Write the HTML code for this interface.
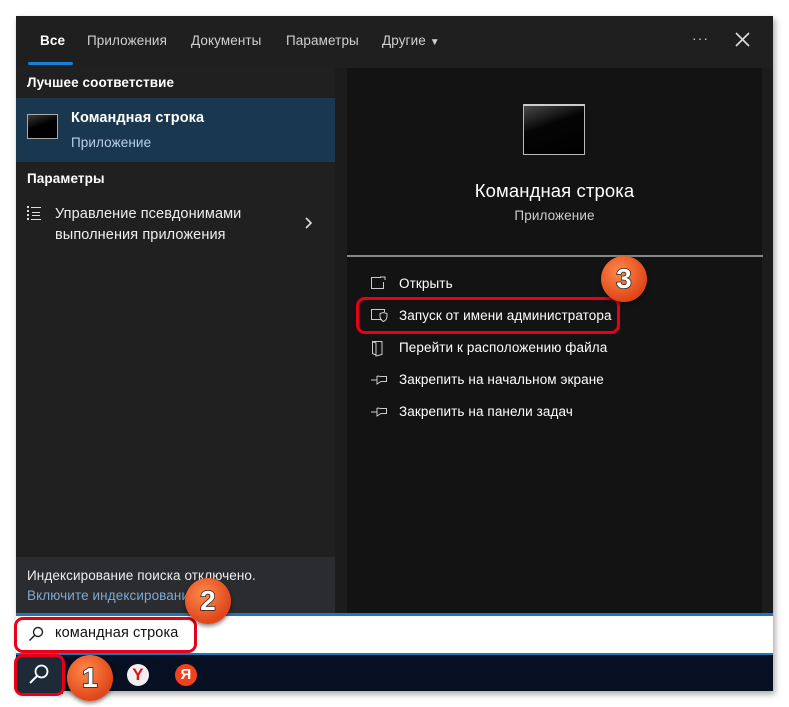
<!DOCTYPE html>
<html><head><meta charset="utf-8"><style>
*{margin:0;padding:0;box-sizing:border-box}
body{width:789px;height:707px;background:#fff;position:relative;overflow:hidden;font-family:"Segoe UI","Liberation Sans","DejaVu Sans",sans-serif;color:#fff;letter-spacing:0.1px}
.a{position:absolute}
.win{left:16px;top:16px;width:757px;height:675px;background:#1c1c1c;box-shadow:2px 3px 6px rgba(0,0,0,.35)}
.tab{top:33px;font-size:13.5px;color:#d0d0d0}
.t{font-size:13.5px;color:#fff;white-space:nowrap}
.badge{width:46px;height:46px;border-radius:50%;background:radial-gradient(circle at 40% 35%,#ff8a4a,#e0461a 70%);box-shadow:0 2px 4px rgba(0,0,0,.5);color:#fff;font:bold 28px "Liberation Sans",sans-serif;text-align:center;line-height:46px;-webkit-text-stroke:1.5px #222;paint-order:stroke fill}
.red{border:3px solid #e8001a;border-radius:9px}
</style></head><body>
<div class="a win"></div>
<div class="a" style="left:16px;top:16px;width:757px;height:52px;background:#1f1f1f"></div>
<div class="a tab" style="left:40px;color:#fff;font-weight:bold">Все</div>
<div class="a" style="left:28px;top:62px;width:45px;height:3px;background:#1a7fd6;border-radius:2px"></div>
<div class="a tab" style="left:87px">Приложения</div>
<div class="a tab" style="left:191px">Документы</div>
<div class="a tab" style="left:286px">Параметры</div>
<div class="a tab" style="left:382px">Другие <span style="font-size:10px">▼</span></div>
<div class="a" style="left:692px;top:30px;font-size:14px;color:#ccc;letter-spacing:1px">···</div>
<svg class="a" style="left:735px;top:32px" width="15" height="15"><path d="M1 1L14 14M14 1L1 14" stroke="#ddd" stroke-width="1.6"/></svg>
<div class="a" style="left:16px;top:68px;width:319px;height:545px;background:#202020"></div>
<div class="a t" style="left:27px;top:75px;font-weight:bold">Лучшее соответствие</div>
<div class="a" style="left:16px;top:98px;width:319px;height:64px;background:#19374f"></div>
<div class="a" style="left:27px;top:114px;width:31px;height:25px;background:linear-gradient(160deg,#3a3a3a,#000 45%);border:1px solid #aaa"></div>
<div class="a t" style="left:71px;top:110px;font-size:14.5px;font-weight:bold">Командная строка</div>
<div class="a t" style="left:71px;top:135px;color:#b9d0e6">Приложение</div>
<div class="a t" style="left:27px;top:171px;font-weight:bold">Параметры</div>
<svg class="a" style="left:27px;top:206px" width="16" height="14"><g fill="#ddd"><rect x="0" y="0" width="2" height="2"/><rect x="0" y="4" width="2" height="2"/><rect x="0" y="8" width="2" height="2"/><rect x="0" y="12" width="2" height="2"/><rect x="4" y="1" width="10" height="1"/><rect x="5" y="6" width="8" height="1"/><rect x="5" y="9" width="8" height="1"/><rect x="4" y="13" width="10" height="1"/></g></svg>
<div class="a t" style="left:55px;top:204px;font-size:14.5px;line-height:21px;color:#eee">Управление псевдонимами<br>выполнения приложения</div>
<svg class="a" style="left:305px;top:217px" width="8" height="12"><path d="M1 1L6 6L1 11" stroke="#ddd" stroke-width="1.6" fill="none"/></svg>
<div class="a" style="left:16px;top:557px;width:319px;height:56px;background:#2b2c2f"></div>
<div class="a t" style="left:27px;top:568px;color:#eee">Индексирование поиска отключено.</div>
<div class="a t" style="left:27px;top:588px;color:#7fa9d0">Включите индексирование</div>
<div class="a" style="left:347px;top:68px;width:415px;height:545px;background:#131313"></div>
<div class="a" style="left:523px;top:104px;width:62px;height:51px;background:linear-gradient(160deg,#4a4a4a,#050505 40%,#000);border:1px solid #bbb;border-top:2px solid #ccc"></div>
<div class="a t" style="left:347px;width:415px;text-align:center;top:180px;font-size:18.5px">Командная строка</div>
<div class="a t" style="left:347px;width:415px;text-align:center;top:208px;color:#ccc">Приложение</div>
<div class="a" style="left:347px;top:255px;width:416px;height:2px;background:#888"></div>
<svg class="a" style="left:370px;top:276px" width="16" height="14"><path d="M11 1.5H1.5V12.5H13.5V6M10 1H15V4" stroke="#ccc" fill="none"/></svg>
<div class="a t" style="left:399px;top:276px">Открыть</div>
<svg class="a" style="left:370px;top:308px" width="18" height="16"><path d="M12 11.5H1.5V1.5H14.5V4M10 8V5.5L13.5 4.5L17 5.5V8Q17 12 13.5 13.5Q10 12 10 8Z" stroke="#ccc" fill="none"/></svg>
<div class="a t" style="left:399px;top:308px">Запуск от имени администратора</div>
<svg class="a" style="left:371px;top:340px" width="14" height="18"><path d="M1.5 1.5L11 1.5V14.5L5 16V3L1.5 1.5V13.5L5 15" stroke="#ccc" fill="none"/></svg>
<div class="a t" style="left:399px;top:340px">Перейти к расположению файла</div>
<svg class="a" style="left:370px;top:374px" width="18" height="12"><path d="M1 6H7M7 2V10L11 7.5H16.5V2.5H11L7 2" stroke="#ccc" fill="none"/></svg>
<div class="a t" style="left:399px;top:372px">Закрепить на начальном экране</div>
<svg class="a" style="left:370px;top:406px" width="18" height="12"><path d="M1 6H7M7 2V10L11 7.5H16.5V2.5H11L7 2" stroke="#ccc" fill="none"/></svg>
<div class="a t" style="left:399px;top:404px">Закрепить на панели задач</div>
<div class="a red" style="left:356px;top:297px;width:264px;height:37px"></div>
<div class="a badge" style="left:601px;top:256px">3</div>
<div class="a" style="left:16px;top:613px;width:757px;height:42px;background:#fff;border-top:3px solid #2474b8;border-bottom:2px solid #2474b8"></div>
<svg class="a" style="left:28px;top:626px" width="16" height="16"><circle cx="10" cy="6" r="4.5" stroke="#222" stroke-width="1.4" fill="none"/><path d="M6.8 9.2L1.5 14.5" stroke="#222" stroke-width="1.5"/></svg>
<div class="a" style="left:55px;top:625px;font-size:14.5px;color:#111">командная строка</div>
<div class="a red" style="left:14px;top:617px;width:183px;height:36px"></div>
<div class="a" style="left:16px;top:655px;width:757px;height:36px;background:#061022"></div>
<div class="a" style="left:17px;top:656px;width:46px;height:38px;background:#1e2a38"></div>
<svg class="a" style="left:28px;top:663px" width="22" height="22"><circle cx="13.5" cy="8.5" r="6" stroke="#fff" stroke-width="1.8" fill="none"/><path d="M9.3 12.7L2 20" stroke="#fff" stroke-width="2"/></svg>
<div class="a red" style="left:14px;top:654px;width:51px;height:42px"></div>
<div class="a" style="left:127px;top:664px;width:22px;height:22px;border-radius:50%;background:#f0f0f0;color:#e01010;font:bold 17px 'Liberation Sans',sans-serif;text-align:center;line-height:22px">Y</div>
<div class="a" style="left:175px;top:664px;width:22px;height:22px;border-radius:50%;background:#f2411d;color:#fff;font:bold 15px 'Liberation Sans',sans-serif;text-align:center;line-height:22px">Я</div>
<div class="a badge" style="left:67px;top:655px">1</div>
<div class="a badge" style="left:185px;top:578px">2</div>
</body></html>
